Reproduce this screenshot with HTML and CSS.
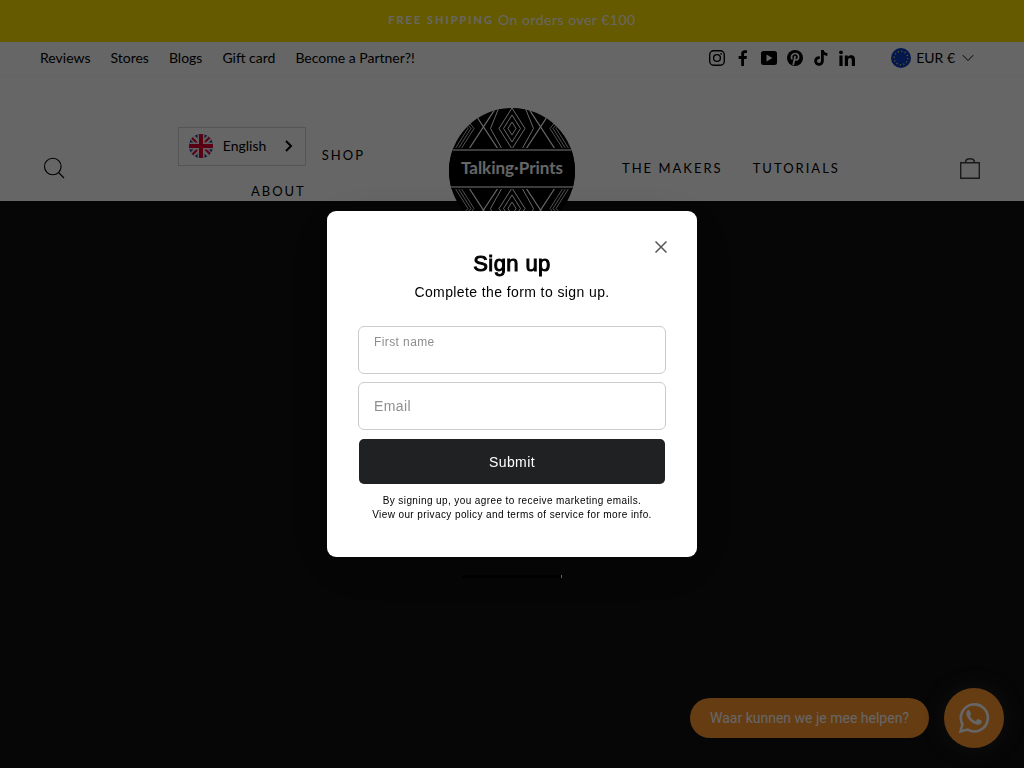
FILE: index.html
```html
<!DOCTYPE html>
<html lang="en">
<head>
  <meta charset="UTF-8">
  <meta name="viewport" content="width=device-width, initial-scale=1.0">
  <title>Talking Prints</title>
  <link rel="stylesheet" href="styles.css">
</head>
<body>
  <div class="announcement"><strong>Free shipping</strong><span>On orders over €100</span></div>

  <div class="toolbar">
    <nav class="toolbar-menu">
      <a href="#">Reviews</a>
      <a href="#">Stores</a>
      <a href="#">Blogs</a>
      <a href="#">Gift card</a>
      <a href="#">Become a Partner?!</a>
    </nav>
    <div class="social">
      <a href="#" aria-label="Instagram"><svg viewBox="0 0 16 16" fill="none" stroke="currentColor" stroke-width="1.4"><rect x=".7" y=".7" width="14.6" height="14.6" rx="4"/><circle cx="8" cy="8" r="3.4"/><circle cx="12.2" cy="3.8" r=".9" fill="currentColor" stroke="none"/></svg></a>
      <a href="#" aria-label="Facebook"><svg viewBox="0 0 16 16" fill="currentColor"><path d="M6.2 16V9H3.6V6h2.6V4C6.200 1.500 7.600.3 9.800.3c1 0 1.900.1 2.200.1V3h-1.500C9.300 3 9 3.600 9 4.400V6h2.900l-.4 3H9v7z"/></svg></a>
      <a href="#" aria-label="YouTube"><svg viewBox="0 0 16 16" fill="currentColor"><path fill-rule="evenodd" d="M2.500 1h11A2.500 2.500 0 0 1 16 3.500v9a2.500 2.500 0 0 1-2.500 2.500h-11A2.500 2.500 0 0 1 0 12.500v-9A2.500 2.500 0 0 1 2.500 1zM5.500 4.500v7l6-3.500z"/></svg></a>
      <a href="#" aria-label="Pinterest"><svg viewBox="0 0 16 16"><circle cx="8" cy="8" r="8" fill="currentColor"/><path d="M5.200 9.200C3.600 7 4.600 3.500 8.200 3.500c4.500 0 4.300 6.500.8 6.500-1 0-1.600-.7-1.600-.7M8.200 6L6.200 15" fill="none" stroke="#fff" stroke-width="1.700"/></svg></a>
      <a href="#" aria-label="TikTok"><svg viewBox="0 0 16 16" fill="none" stroke="currentColor" stroke-width="2.800"><path d="M9.400 0v11a3.400 3.400 0 1 1-3.400-3.400h.8M9.400 0c.2 2.700 2.200 4.400 5 4.500"/></svg></a>
      <a href="#" aria-label="LinkedIn"><svg viewBox="0 0 16 16" fill="currentColor"><circle cx="2" cy="2.300" r="1.900"/><path d="M.4 5.500h3.200V16H.4zM5.800 5.500h3v1.400c.6-1 1.700-1.700 3.200-1.700 3.100 0 4 2 4 4.800v6h-3.200v-5.300c0-1.400-.3-2.800-1.800-2.800-1.600 0-2 1.300-2 2.700V16H5.800z"/></svg></a>
    </div>
    <button class="currency" type="button">
      <svg class="flag" viewBox="0 0 20 20"><circle cx="10" cy="10" r="10" fill="#0a3cc0"/><circle cx="10" cy="10" r="6.800" fill="none" stroke="#e0c860" stroke-width="1.400" stroke-dasharray="1.200 2.360"/></svg>
      <span>EUR €</span>
      <svg class="chevron" viewBox="0 0 12 8" fill="none" stroke="currentColor"><path d="M.8 1.200L6 6.500l5.200-5.300"/></svg>
    </button>
  </div>

  <header class="site-header">
    <div class="side side-left">
      <a class="icon-link" href="#" aria-label="Search"><svg viewBox="0 0 28 28" fill="none" stroke="currentColor" stroke-width="1.100"><circle cx="12.800" cy="12.500" r="8.300"/><path d="M18.500 18.500l5.500 5.500"/></svg></a>
      <nav class="site-nav">
        <div class="nav-stack">
          <button class="language" type="button">
            <svg class="uk" viewBox="0 0 24 24"><defs><clipPath id="round"><circle cx="12" cy="12" r="12"/></clipPath></defs><g clip-path="url(#round)"><path fill="#0a3ca0" d="M0 0h24v24H0z"/><path stroke="#f0f0f0" stroke-width="6" d="M0 0l24 24M24 0L0 24"/><path stroke="#e00030" stroke-width="2" d="M0 1l10 10M24 0L13 11M0 24l11-11M24 23L14 13"/><path stroke="#f0f0f0" stroke-width="7" d="M12 0v24M0 12h24"/><path stroke="#e00030" stroke-width="4" d="M12 0v24M0 12h24"/></g></svg>
            <span>English</span>
            <svg class="arrow" viewBox="0 0 8 12" fill="none" stroke="currentColor" stroke-width="2"><path d="M1 1l5 5-5 5"/></svg>
          </button>
          <a href="#">About</a>
        </div>
        <a class="shop" href="#">Shop</a>
      </nav>
    </div>

    <a class="logo" href="#" aria-label="Talking Prints">
      <svg viewBox="0 0 126 126">
        <defs>
          <clipPath id="disc"><circle cx="63" cy="63" r="63"/></clipPath>
          <g id="pattern" fill="none" stroke="#fff">
            <path d="M63 14l4 6.500-4 6.500-4-6.500zM63 7l8.500 13.500L63 34l-8.500-13.500zM63 0l13 20.500L63 41 50 20.500zM53-8L41.500 20.500 53 41M73-8l11.500 28.500L73 41"/>
            <path stroke-width="1.300" d="M22 0l27 41M52-8L20 41M104 0L77 41M74-8l32 49"/>
            <path stroke-width=".8" d="M15 8l10 12.500L12 41M11 8l11 12.500L9 41M7 8l12 12.500L6 41M111 8l-10 12.500L114 41M115 8l-11 12.500L117 41M119 8l-12 12.500L120 41"/>
          </g>
        </defs>
        <g clip-path="url(#disc)">
          <path d="M0 0h126v126H0z"/>
          <use href="#pattern"/>
          <use href="#pattern" transform="matrix(1 0 0 -1 0 121)"/>
          <path fill="#000" d="M0 40h126v41H0z"/>
          <path fill="#999" d="M0 41h126v2H0zM0 78h126v2H0z"/>
          <text class="logo-text" x="63" y="66" text-anchor="middle">Talking·Prints</text>
        </g>
      </svg>
    </a>

    <div class="side side-right">
      <nav class="site-nav">
        <a href="#">The makers</a>
        <a href="#">Tutorials</a>
      </nav>
      <a class="icon-link cart" href="#" aria-label="Cart"><svg viewBox="0 0 28 28" fill="none" stroke="currentColor" stroke-width="1.400"><path d="M4.700 8.700h18.600v15.600H4.700z"/><path d="M9.500 8.500c0-5 9-5 9 0"/></svg></a>
    </div>
  </header>

  <main class="hero">
    <div class="loader"></div>
  </main>

  <div class="chat">
    <a class="chat-text" href="#">Waar kunnen we je mee helpen?</a>
    <button class="chat-button" type="button" aria-label="WhatsApp">
      <svg viewBox="0 0 32 32"><path fill="none" stroke="currentColor" stroke-width="2.600" d="M2.500 29.500l2-7.200A13.500 13.500 0 1 1 9.700 27.600z"/><path fill="currentColor" d="M11.500 8.500c-.6-1-1.500-.7-2.200 0-3.500 4 2.500 11 6.500 13 4.500 2.300 7.500 1.200 8-1.700.2-1-.2-1.200-3.600-2.700-1-.4-1.300 1.200-2.500 2-1.500 0-5.500-3.600-5.700-5.200.6-1 1.300-1.600 1-2.400z"/></svg>
    </button>
  </div>

  <div class="overlay">
    <form class="modal" role="dialog" aria-labelledby="modal-title">
      <button class="close" type="button" aria-label="Close"><svg viewBox="0 0 12 12" fill="none" stroke="currentColor" stroke-width="1.500"><path d="M.5.5l11 11M11.500.5l-11 11"/></svg></button>
      <h2 id="modal-title">Sign up</h2>
      <p class="intro">Complete the form to sign up.</p>
      <div class="field active">
        <input id="first-name" type="text">
        <label for="first-name">First name</label>
      </div>
      <div class="field">
        <input id="email" type="email">
        <label for="email">Email</label>
      </div>
      <button class="submit" type="submit">Submit</button>
      <p class="terms">By signing up, you agree to receive marketing emails.<br>View our privacy policy and terms of service for more info.</p>
    </form>
  </div>
</body>
</html>
```

FILE: styles.css
```css
* {
  box-sizing: border-box;
}

body {
  display: flex;
  flex-direction: column;
  margin: 0;
  height: 100vh;
  overflow: hidden;
  background: #fff;
  color: #000;
  font-family: Lato, sans-serif;
  font-size: 14px;
}

a {
  color: inherit;
  text-decoration: none;
}

button {
  padding: 0;
  border: 0;
  background: none;
  color: inherit;
  font: inherit;
  letter-spacing: inherit;
  cursor: pointer;
}

svg {
  display: block;
}

.announcement {
  display: flex;
  align-items: center;
  justify-content: center;
  gap: 4px;
  padding: 10px 40px 12px;
  background: #ffe100;
  color: #fff;
  line-height: 20px;
  letter-spacing: 0.5px;
}

.announcement strong {
  font-size: 11px;
  font-weight: 700;
  letter-spacing: 2px;
  text-transform: uppercase;
}

.toolbar {
  display: flex;
  align-items: center;
  height: 34px;
  padding: 0 50px 2px 40px;
  border-bottom: 1px solid #f8f8f8;
}

.toolbar-menu {
  display: flex;
  gap: 20px;
  flex: 1;
}

.social {
  display: flex;
  gap: 10px;
  margin-right: 36px;
}

.social svg {
  width: 16px;
  height: 16px;
}

.currency {
  display: flex;
  align-items: center;
  gap: 5px;
}

.flag {
  width: 20px;
  height: 20px;
}

.chevron {
  width: 12px;
  height: 8px;
  margin-left: 2px;
}

.site-header {
  position: relative;
  z-index: 1;
  display: grid;
  grid-template-columns: 1fr 126px 1fr;
  align-items: center;
  padding: 32px 40px 0;
}

.side {
  display: flex;
  align-items: center;
  justify-content: space-between;
  padding-bottom: 6px;
}

.side-left {
  padding-right: 84px;
}

.side-right {
  padding-left: 47px;
}

.icon-link svg {
  width: 28px;
  height: 28px;
}

.cart {
  color: #444;
}

.site-nav {
  display: flex;
  gap: 30px;
  font-size: 13px;
  line-height: 18px;
  letter-spacing: 2px;
  text-transform: uppercase;
}

.side-left .site-nav {
  gap: 16px;
}

.nav-stack {
  display: flex;
  flex-direction: column;
  align-items: flex-end;
  gap: 16px;
  padding-bottom: 10px;
}

.shop {
  padding-top: 19px;
}

.language {
  display: flex;
  align-items: center;
  width: 128px;
  height: 39px;
  padding: 0 12px 0 10px;
  border: 1px solid #d5d5d5;
  font-size: 14px;
  letter-spacing: 0;
}

.language span {
  flex: 1;
  padding-left: 10px;
  text-align: left;
}

.uk {
  width: 24px;
  height: 24px;
}

.arrow {
  width: 8px;
  height: 12px;
}

.logo-text {
  fill: #fff;
  font-size: 17px;
  font-weight: 700;
}

.hero {
  flex: 1;
  margin-top: -33px;
  padding-top: 374px;
  background: #0f0f0f;
}

.loader {
  width: 100px;
  height: 3px;
  margin: 0 auto;
  border-right: 1px solid #fff;
  background: #000;
}

.chat {
  position: fixed;
  right: 20px;
  bottom: 20px;
  display: flex;
  align-items: center;
  gap: 15px;
  color: #fff;
}

.chat-text {
  padding: 0 20px;
  border-radius: 20px;
  background: #ff9830;
  font-family: Roboto, sans-serif;
  font-size: 14px;
  line-height: 40px;
}

.chat-button {
  display: grid;
  place-items: center;
  width: 60px;
  height: 60px;
  border-radius: 50%;
  background: #ff9830;
  box-shadow: 0 0 14px 6px #1c1c1c;
}

.chat-button svg {
  width: 32px;
  height: 32px;
}

.overlay {
  position: fixed;
  inset: 0;
  z-index: 10;
  display: grid;
  place-items: center;
  background: rgba(0, 0, 0, 0.6);
}

.modal {
  position: relative;
  width: 370px;
  padding: 38px 31px 35px;
  border-radius: 9px;
  background: #fff;
  box-shadow: 0 10px 60px rgba(0, 0, 0, 0.1);
  font-family: "Liberation Sans", Arial, sans-serif;
  letter-spacing: 0.4px;
  text-align: center;
}

.close {
  position: absolute;
  top: 20px;
  right: 20px;
  padding: 10px;
  color: #555;
}

.close svg {
  width: 12px;
  height: 12px;
}

.modal h2 {
  margin: 0;
  font-size: 22px;
  font-weight: 400;
  line-height: 30px;
  -webkit-text-stroke: 1px #000;
}

.intro {
  margin: 3px 0 24px;
  line-height: 20px;
}

.field {
  position: relative;
  margin-bottom: 8px;
}

.field input {
  display: block;
  width: 100%;
  height: 48px;
  padding: 16px 15px 0;
  border: 1px solid #ccc;
  border-radius: 6px;
  background: #fff;
  font: inherit;
  outline: none;
}

.field label {
  position: absolute;
  top: 14px;
  left: 16px;
  color: #8e8e8e;
  line-height: 20px;
}

.field.active label {
  top: 6px;
  font-size: 12px;
}

.submit {
  display: block;
  width: calc(100% - 2px);
  height: 45px;
  margin: 9px auto 10px;
  border-radius: 5px;
  background: #202123;
  color: #fff;
}

.terms {
  margin: 0 -10px;
  font-size: 10px;
  line-height: 14px;
}
```
